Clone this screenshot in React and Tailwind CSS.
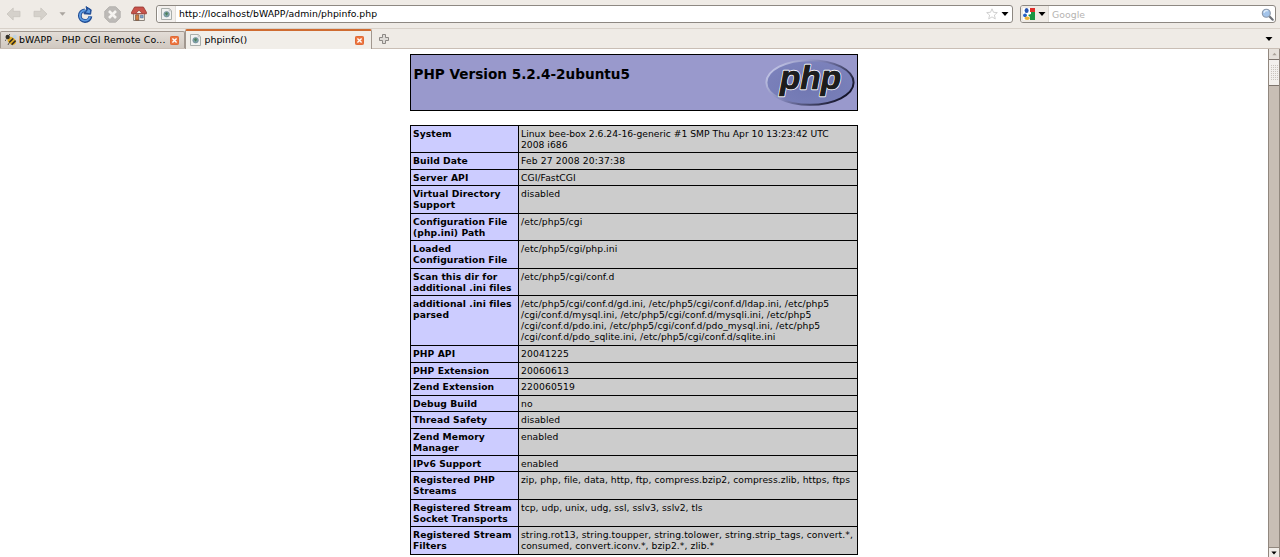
import React from "react";

const rows = [
  { h: "h-[27px]", t: "tracking-[0.01px]", k: ["System"], v: ["Linux bee-box 2.6.24-16-generic #1 SMP Thu Apr 10 13:23:42 UTC", "2008 i686"] },
  { h: "h-[17px]", t: "tracking-[0.14px]", k: ["Build Date"], v: ["Feb 27 2008 20:37:38"] },
  { h: "h-[16px]", k: ["Server API"], v: ["CGI/FastCGI"] },
  { h: "h-[28px]", k: ["Virtual Directory", "Support"], v: ["disabled"] },
  { h: "h-[27px]", k: ["Configuration File", "(php.ini) Path"], v: ["/etc/php5/cgi"] },
  { h: "h-[28px]", k: ["Loaded", "Configuration File"], v: ["/etc/php5/cgi/php.ini"] },
  { h: "h-[27px]", t: "tracking-[0.11px]", k: ["Scan this dir for", "additional .ini files"], v: ["/etc/php5/cgi/conf.d"] },
  {
    h: "h-[50px]",
    k: ["additional .ini files", "parsed"],
    v: [
      "/etc/php5/cgi/conf.d/gd.ini, /etc/php5/cgi/conf.d/ldap.ini, /etc/php5",
      "/cgi/conf.d/mysql.ini, /etc/php5/cgi/conf.d/mysqli.ini, /etc/php5",
      "/cgi/conf.d/pdo.ini, /etc/php5/cgi/conf.d/pdo_mysql.ini, /etc/php5",
      "/cgi/conf.d/pdo_sqlite.ini, /etc/php5/cgi/conf.d/sqlite.ini",
    ],
  },
  { h: "h-[17px]", t: "tracking-[0.14px]", k: ["PHP API"], v: ["20041225"] },
  { h: "h-[16px]", t: "tracking-[0.14px]", k: ["PHP Extension"], v: ["20060613"] },
  { h: "h-[17px]", t: "tracking-[0.14px]", k: ["Zend Extension"], v: ["220060519"] },
  { h: "h-[16px]", k: ["Debug Build"], v: ["no"] },
  { h: "h-[17px]", k: ["Thread Safety"], v: ["disabled"] },
  { h: "h-[27px]", k: ["Zend Memory", "Manager"], v: ["enabled"] },
  { h: "h-[16px]", k: ["IPv6 Support"], v: ["enabled"] },
  { h: "h-[28px]", t: "tracking-[0.05px]", k: ["Registered PHP", "Streams"], v: ["zip, php, file, data, http, ftp, compress.bzip2, compress.zlib, https, ftps"] },
  { h: "h-[27px]", t: "tracking-[0.04px]", k: ["Registered Stream", "Socket Transports"], v: ["tcp, udp, unix, udg, ssl, sslv3, sslv2, tls"] },
  {
    h: "h-[28px]",
    t: "tracking-[0.08px]",
    k: ["Registered Stream", "Filters"],
    v: ["string.rot13, string.toupper, string.tolower, string.strip_tags, convert.*,", "consumed, convert.iconv.*, bzip2.*, zlib.*"],
  },
];

function Arrow({ flip }) {
  return (
    <svg width="15" height="14" viewBox="0 0 15 14" className={flip ? "-scale-x-100" : ""}>
      <path d="M1 7 7.2 1v3.3H14v5.4H7.2V13Z" fill="#d5d1cb" stroke="#c9c5bf" strokeWidth=".8" strokeLinejoin="round" />
    </svg>
  );
}

function Caret({ className = "" }) {
  return (
    <svg width="8" height="4" viewBox="0 0 8 4" className={className}>
      <path d="M.5 0h7L4 4Z" fill="currentColor" />
    </svg>
  );
}

function Reload() {
  return (
    <svg width="16" height="17" viewBox="0 0 16 17">
      <path d="M13.4 10.2A5.3 5.3 0 1 1 7.8 4.4" fill="none" stroke="#1f4b94" strokeWidth="3.8" />
      <path d="M7 7.8 7.6 5 9.8 3.4 9 .6l5.2 3.2-.6 4.4Z" fill="#1f4b94" stroke="#1f4b94" strokeLinejoin="round" />
      <path d="M13 10.5A5.1 5.1 0 1 1 8.6 4.5" fill="none" stroke="#5c9ae0" strokeWidth="1.9" />
      <path d="m8.8 6.6 2.2-2.8-.6-1.4 2.8 1.9-.4 2.9Z" fill="#5c9ae0" />
    </svg>
  );
}

function Stop() {
  return (
    <svg width="17" height="17" viewBox="0 0 17 17">
      <path d="M5.3.8h6.4l4.5 4.5v6.4l-4.5 4.5H5.3L.8 11.7V5.3Z" fill="#bdbab7" stroke="#b6b3b0" strokeLinejoin="round" />
      <path d="m5 5 7 7m0-7-7 7" stroke="#f6f4f1" strokeWidth="2.6" />
    </svg>
  );
}

function Home() {
  return (
    <svg width="16" height="16" viewBox="0 0 16 16">
      <path d="M2.6 7h10.8v7.5H2.6z" fill="#f3f0ea" stroke="#8a827a" />
      <path d="M3.6 1h8.8l3 5.2v1.6H.6V6.2Z" fill="#c9534b" stroke="#963630" strokeWidth=".8" strokeLinejoin="round" />
      <path d="m4.6 7.6 3.4-3.4 3.4 3.4Z" fill="#f3f0ea" stroke="#963630" strokeWidth=".8" />
      <path d="M4.6 8.8h3.2v5.4H4.6z" fill="#d87f3f" stroke="#6d4732" strokeWidth=".7" />
      <path d="M9.4 9.3h2.7v2.6H9.4z" fill="#7aa5d7" stroke="#526780" strokeWidth=".6" />
    </svg>
  );
}

function PageIcon() {
  return (
    <svg width="11" height="12" viewBox="0 0 11 12">
      <path d="M.5.5h7.8l2.2 2.2v8.8H.5Z" fill="#f1f2f1" stroke="#a9aeab" />
      <circle cx="5.6" cy="6.2" r="2.8" fill="#7fa3a6" stroke="#6b8799" strokeWidth=".6" />
      <path d="M4 5.3 6 4l1 1.8-1.5 2Z" fill="#4d8057" />
      <path d="M8.2.8v2.1h2" fill="none" stroke="#aaa" strokeWidth=".6" />
    </svg>
  );
}

function BeeIcon() {
  return (
    <svg width="12" height="12" viewBox="0 0 12 12">
      <ellipse cx="9.4" cy="3.3" rx="2" ry="2.6" fill="#bfd3e4" transform="rotate(30 9.4 3.3)" />
      <ellipse cx="6.8" cy="7" rx="4.6" ry="3.4" fill="#e4ae27" transform="rotate(42 6.8 7)" />
      <circle cx="2.7" cy="3" r="2.2" fill="#333029" />
      <path d="m4.2 8.6 4-4.2M6.6 10.6l4-4" stroke="#2d2924" strokeWidth="1.5" />
      <path d="M1 5.5 0 7M4 1 5 0M4 9l-1 2" stroke="#333029" strokeWidth=".8" />
    </svg>
  );
}

function CloseIcon() {
  return (
    <svg width="9" height="9" viewBox="0 0 9 9">
      <rect x=".5" y=".5" width="8" height="8" rx=".8" fill="#ed7540" stroke="#e06a35" />
      <path d="m2.4 2.4 4.2 4.2m0-4.2L2.4 6.6" stroke="#fff" strokeWidth="1.4" />
    </svg>
  );
}

function Star() {
  return (
    <svg width="12" height="12" viewBox="0 0 12 12">
      <path d="m6 .8 1.5 3.5 3.8.3-2.9 2.5.9 3.8L6 8.9l-3.3 2 .9-3.8L.7 4.6l3.8-.3Z" fill="#fff" stroke="#c5c5c5" strokeWidth=".8" />
    </svg>
  );
}

function SearchEngineIcon() {
  return (
    <svg width="12" height="12" viewBox="0 0 12 12">
      <path fill="#fff" d="M0 0h12v12H0z" />
      <path fill="#e02e2b" d="M7 0h5v4H7z" />
      <path fill="#169542" d="M8 4h4v8H7V9l-2-2 3-1z" />
      <ellipse cx="3.6" cy="2.6" rx="2" ry="2.5" fill="#2454b2" />
      <circle cx="2" cy="7.3" r="1.9" fill="#2863c6" />
      <ellipse cx="4.2" cy="10.2" rx="2.7" ry="1.7" fill="#ecb335" />
    </svg>
  );
}

function Magnifier() {
  return (
    <svg width="13" height="13" viewBox="0 0 13 13">
      <path d="m8.3 8.3 3.4 3.4" stroke="#6c7077" strokeWidth="2.2" strokeLinecap="round" />
      <circle cx="5.3" cy="5.2" r="4" fill="#a3c4ea" stroke="#8b98aa" strokeWidth="1.1" />
      <path d="M3 4.8A2.5 2.5 0 0 1 6.8 3" fill="none" stroke="#e5f0fb" strokeWidth="1.2" />
    </svg>
  );
}

function PhpLogo() {
  return (
    <svg width="90" height="48" viewBox="0 0 90 48">
      <defs>
        <linearGradient id="rim" x1="0" y1=".1" x2="1" y2=".6">
          <stop offset="0" stopColor="#d0d3f0" />
          <stop offset=".5" stopColor="#7a7db0" />
          <stop offset="1" stopColor="#15152c" />
        </linearGradient>
        <radialGradient id="disc" cx=".5" cy=".65" r=".6">
          <stop offset="0" stopColor="#7178b2" />
          <stop offset="1" stopColor="#7b81bb" />
        </radialGradient>
      </defs>
      <ellipse cx="45" cy="23.5" rx="43.6" ry="22.3" fill="url(#disc)" stroke="url(#rim)" strokeWidth="2" />
      <text x="15" y="29.6" textLength="61" lengthAdjust="spacingAndGlyphs" fontFamily="Liberation Sans, sans-serif" fontWeight="700" fontStyle="italic" fontSize="34" fill="#1d1d1d" stroke="#f4f4f8" strokeWidth="2.4" strokeLinejoin="round" paintOrder="stroke">php</text>
      <text x="15" y="29.6" textLength="61" lengthAdjust="spacingAndGlyphs" fontFamily="Liberation Sans, sans-serif" fontWeight="700" fontStyle="italic" fontSize="34" fill="#1d1d1d" stroke="#1d1d1d" strokeWidth=".7" aria-hidden="true">php</text>
    </svg>
  );
}

function Toolbar() {
  return (
    <header className="flex h-[29px] shrink-0 items-center border-b border-[#d8d1c9] bg-[#efebe6]">
      <div className="flex w-[156px] shrink-0 items-center pl-[6px] text-[#aaa59f]">
        <Arrow />
        <div className="ml-[12px]"><Arrow flip /></div>
        <Caret className="ml-[11px] w-[7px]" />
        <div className="ml-[11px]"><Reload /></div>
        <div className="ml-[11px]"><Stop /></div>
        <div className="ml-[10px]"><Home /></div>
      </div>
      <div className="flex h-[18px] w-[857px] items-center rounded-[3px] border border-[#8d8882] bg-white pl-px">
        <div className="flex h-full w-[18px] items-center justify-center border-r border-[#e2deda] bg-[#f3f0ed]"><PageIcon /></div>
        <span className="ml-[3px] text-[9.3px] tracking-[0.04px]">http://localhost/bWAPP/admin/phpinfo.php</span>
        <div className="mr-[3px] ml-auto flex items-center gap-[3px]"><Star /><Caret /></div>
      </div>
      <div className="ml-[7px] flex h-[18px] w-[256px] items-center rounded-[3px] border border-[#8d8882] bg-white">
        <div className="flex h-full w-[28px] items-center gap-[3px] rounded-l-[2px] border-r border-[#ddd9d4] bg-[#efebe6] pl-[2px]"><SearchEngineIcon /><Caret /></div>
        <span className="ml-[3px] pt-px text-[9.3px] tracking-[0.04px] text-[#b5b3b1]">Google</span>
        <div className="mr-[1px] ml-auto"><Magnifier /></div>
      </div>
    </header>
  );
}

function TabBar() {
  return (
    <nav className="flex h-[20px] shrink-0 items-end border-b border-[#c9beb5] bg-[#efebe6]">
      <div className="flex h-[17px] w-[185px] items-center rounded-t-[2px] border border-b-0 border-[#a1978f] bg-linear-to-b from-[#e3ddd7] to-[#d0c8c0] pl-[4px]">
        <BeeIcon />
        <span className="ml-[2px] text-[9.4px] tracking-[0.13px] whitespace-nowrap">bWAPP - PHP CGI Remote Co...</span>
        <div className="mr-[5px] ml-auto"><CloseIcon /></div>
      </div>
      <div className="-mb-px flex h-[20px] w-[187px] items-center rounded-t-[2px] border border-t-2 border-b-0 border-[#a1978f] border-t-[#cf6c32] bg-[#f1eee9] pl-[4px]">
        <PageIcon />
        <span className="ml-[3.5px] text-[9.4px]">phpinfo()</span>
        <div className="mr-[7px] ml-auto"><CloseIcon /></div>
      </div>
      <svg width="10" height="10" viewBox="0 0 10 10" className="mb-[4px] ml-[7px]">
        <path d="M3.5.5h3v3h3v3h-3v3h-3v-3h-3v-3h3Z" fill="#dedbd7" stroke="#817e7b" strokeWidth=".9" />
      </svg>
      <Caret className="mr-[7px] mb-[7px] ml-auto" />
    </nav>
  );
}

function Scrollbar() {
  return (
    <div className="flex w-[12px] shrink-0 flex-col border-x border-[#91877e] bg-[#c8beb5]">
      <div className="flex h-[10px] items-center justify-center bg-[#e6e1db] text-[#aaa29a]"><Caret className="w-[5px] rotate-180" /></div>
      <div className="flex h-[27px] flex-col items-center justify-center border-y border-[#7d746d] bg-[#f3f0ed]">
        <svg width="7" height="15" viewBox="0 0 7 15"><path d="M.5 0v15M2.5 0v15M4.5 0v15M6.5 0v15" stroke="#cac4be" strokeDasharray="1 1" /></svg>
      </div>
      <div className="mt-auto flex h-[10px] items-center justify-center border-t border-[#91877e] bg-[#f0ece8]"><Caret className="w-[6px]" /></div>
    </div>
  );
}

function Lines({ items }) {
  return items.map((line) => <div key={line}>{line}</div>);
}

export default function App() {
  return (
    <div className="flex h-[557px] w-[1280px] flex-col overflow-hidden bg-white font-['DejaVu_Sans',sans-serif] text-black">
      <Toolbar />
      <TabBar />
      <div className="flex min-h-0 grow">
        <main className="flex min-w-0 grow flex-col pt-[5px] pl-[410px]">
          <div className="flex h-[57px] w-[448px] shrink-0 justify-between border border-black bg-[#9999cc] pt-[4px] pr-[2px] pl-[2.5px]">
            <h1 className="mt-[6px] text-[13.6px] leading-[18px] font-bold whitespace-nowrap">PHP Version 5.2.4-2ubuntu5</h1>
            <PhpLogo />
          </div>
          <div className="mt-[14px] w-[448px] shrink-0 border-x border-b border-black text-[9.2px] leading-[11.2px] whitespace-nowrap">
            {rows.map((row) => (
              <div key={row.k.join(" ")} className={`flex border-t border-black ${row.h}`}>
                <div className="w-[108px] shrink-0 border-r border-black bg-[#ccccff] pt-[1.6px] pl-[2px] font-bold tracking-[0.08px]"><Lines items={row.k} /></div>
                <div className={`grow bg-[#cccccc] pt-[1.6px] pl-[2px] ${row.t || "tracking-[0.07px]"}`}><Lines items={row.v} /></div>
              </div>
            ))}
          </div>
        </main>
        <Scrollbar />
      </div>
    </div>
  );
}
